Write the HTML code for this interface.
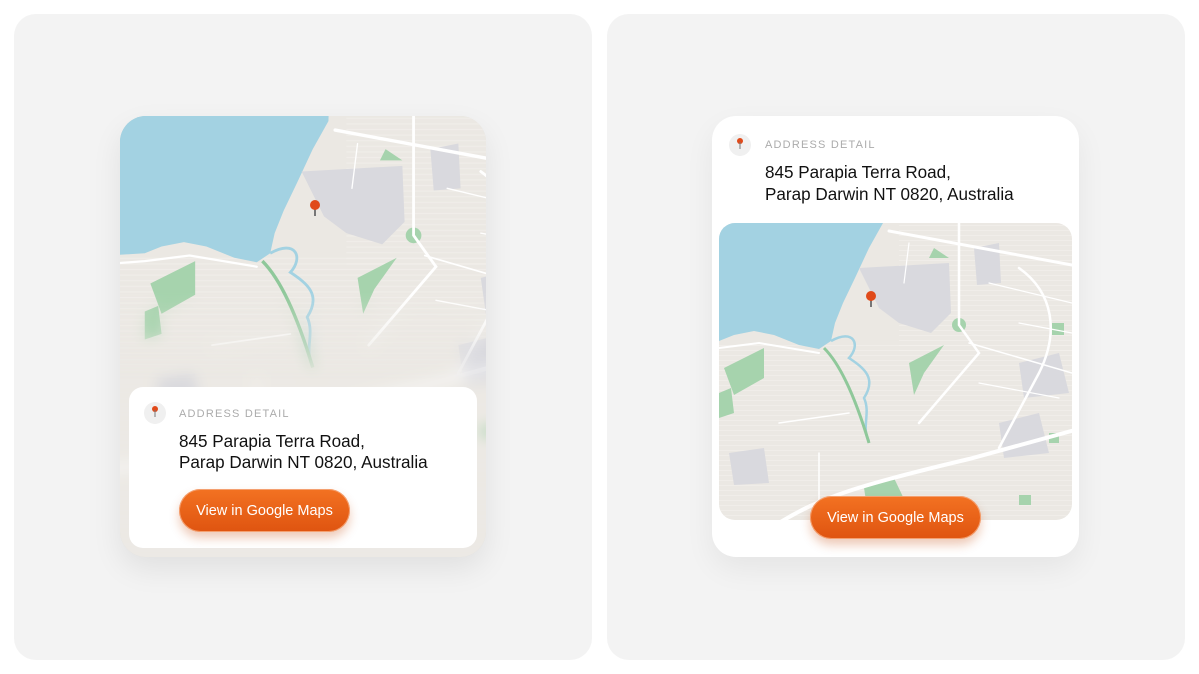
<!DOCTYPE html>
<html><head><meta charset="utf-8"><style>
*{margin:0;padding:0;box-sizing:border-box}
html,body{width:1199px;height:674px;overflow:hidden}
body{background:#fff;font-family:"Liberation Sans",sans-serif;position:relative}
.panel{position:absolute;top:14px;width:578px;height:646px;background:#f3f3f3;border-radius:22px}
.abs{position:absolute}
.lbl{font-size:11px;letter-spacing:1.2px;color:#ababab}
.addr{font-size:17.1px;line-height:21px;color:#111}
.ic{width:22px;height:22px;border-radius:50%;background:#f0f0f0}
.btn{border-radius:22px;background:linear-gradient(#f37222,#df5410);color:#fff;font-size:14.5px;display:flex;align-items:center;justify-content:center;box-shadow:0 0 0 1px #f4a070 inset,0 6px 10px rgba(200,80,20,.3)}
</style></head><body>
<svg width="1" height="1" style="position:absolute;left:0;top:0"><defs>
<pattern id="st" width="5" height="5" patternUnits="userSpaceOnUse"><path d="M0 2.5H5" stroke="#f3f1ed" stroke-width="1"/></pattern>
<g id="map">
<rect x="-200" y="-200" width="800" height="800" fill="#ebe8e3"/>
<rect x="-200" y="120" width="800" height="400" fill="url(#st)" opacity=".6"/>
<rect x="180" y="-200" width="400" height="330" fill="url(#st)" opacity=".6"/>
<polygon points="-200,-200 170,-200 164,0 150,25 136,55 124,80 116,100 112,118 100,126 80,122 55,112 35,108 15,112 0,118 -200,130" fill="#a3d2e2"/>
<polygon points="140,45 230,40 232,90 212,110 180,100 160,85" fill="#d9d9de"/>
<polygon points="255,25 280,20 282,60 258,62" fill="#d9d9de"/>
<polygon points="10,230 45,225 50,260 15,262" fill="#d9d9de"/>
<polygon points="280,200 320,190 330,230 285,235" fill="#d9d9de"/>
<polygon points="300,140 340,130 350,170 305,175" fill="#d9d9de"/>
<polygon points="5,145 45,125 45,155 15,172" fill="#a6d3ad"/>
<polygon points="0,170 12,165 15,190 0,195" fill="#a6d3ad"/>
<polygon points="145,265 175,255 195,297 150,297" fill="#a6d3ad"/>
<polygon points="190,140 225,122 205,150 195,172" fill="#a6d3ad"/>
<polygon points="210,35 230,35 215,25" fill="#a6d3ad"/>
<circle cx="240" cy="102" r="7" fill="#a6d3ad"/>
<rect x="330" y="210" width="10" height="10" fill="#a6d3ad"/>
<rect x="300" y="272" width="12" height="10" fill="#a6d3ad"/>
<rect x="333" y="100" width="12" height="12" fill="#a6d3ad"/>
<path d="M112,118 C135,105 142,122 130,135 C145,145 158,155 145,175 C152,190 142,205 150,218" stroke="#a3d2e2" stroke-width="2.5" fill="none"/>
<path d="M105,125 C120,140 135,170 150,220" stroke="#8fc89a" stroke-width="3" fill="none"/>
<g stroke="#fff" fill="none" stroke-linecap="round">
<path d="M-200,330 L60,300 C100,275 140,262 250,236 L400,195" stroke-width="4"/>
<path d="M170,8 L353,42 L400,50" stroke-width="3"/>
<path d="M240,-100 L240,102 L260,130 L200,200" stroke-width="2.5"/>
<path d="M300,45 C335,70 340,110 320,150 L280,225" stroke-width="2.5"/>
<path d="M-200,140 L0,125 L40,120 L100,130" stroke-width="2"/>
<path d="M100,230 L100,300 M60,200 L130,190" stroke-width="1.5"/>
<path d="M250,120 L353,150" stroke-width="1.5"/>
<path d="M270,60 L353,80 M190,20 L185,60 M300,100 L353,110 M260,160 L340,175" stroke-width="1.2"/>
</g>
</g>
<g id="pin"><rect x="-1" y="0" width="2" height="10" fill="#777"/><circle cx="0" cy="-1" r="5" fill="#e04a1a"/></g>
<filter id="bl" x="-20%" y="-20%" width="140%" height="140%"><feGaussianBlur stdDeviation="7"/></filter>
<linearGradient id="fg" x1="0" y1="0" x2="0" y2="1"><stop offset="0.4" stop-color="#fff"/><stop offset="0.6" stop-color="#000"/></linearGradient>
<mask id="mk" maskUnits="userSpaceOnUse" x="0" y="0" width="366" height="441"><rect width="366" height="441" fill="url(#fg)"/></mask>
</defs></svg>

<div class="panel" style="left:14px"></div>
<div class="panel" style="left:607px"></div>

<div class="abs" style="left:120px;top:116px;width:366px;height:441px;border-radius:26px;overflow:hidden;box-shadow:0 12px 30px rgba(0,0,0,.08);background:#dcdcd6">
<svg width="366" height="441">
<g filter="url(#bl)"><g transform="translate(195,88) scale(1.12) translate(-152,-74)"><use href="#map"/></g></g>
<g mask="url(#mk)"><g transform="translate(195,88) scale(1.12) translate(-152,-74)"><use href="#map"/></g></g>
<use href="#pin" transform="translate(195,90)"/>
</svg>
</div>
<div class="abs" style="left:129px;top:387px;width:348px;height:161px;background:#fff;border-radius:14px"></div>
<div class="abs ic" style="left:144px;top:402px"></div>
<svg class="abs" style="left:150px;top:404px" width="10" height="16"><circle cx="5" cy="5" r="3" fill="#e04a1a"/><rect x="4.5" y="6" width="1" height="7" fill="#777"/></svg>
<div class="abs lbl" style="left:179px;top:408px">ADDRESS DETAIL</div>
<div class="abs addr" style="left:179px;top:431px">845 Parapia Terra Road,<br>Parap Darwin NT 0820, Australia</div>
<div class="abs btn" style="left:179px;top:489px;width:171px;height:43px">View in Google Maps</div>

<div class="abs" style="left:712px;top:116px;width:367px;height:441px;background:#fff;border-radius:24px;box-shadow:0 12px 30px rgba(0,0,0,.06)"></div>
<div class="abs ic" style="left:729px;top:134px"></div>
<svg class="abs" style="left:735px;top:136px" width="10" height="16"><circle cx="5" cy="5" r="3" fill="#e04a1a"/><rect x="4.5" y="6" width="1" height="7" fill="#777"/></svg>
<div class="abs lbl" style="left:765px;top:139px">ADDRESS DETAIL</div>
<div class="abs addr" style="left:765px;top:162px;line-height:22px">845 Parapia Terra Road,<br>Parap Darwin NT 0820, Australia</div>
<div class="abs" style="left:719px;top:223px;width:353px;height:297px;border-radius:16px;overflow:hidden">
<svg width="353" height="297"><use href="#map"/><use href="#pin" transform="translate(152,74)"/></svg>
</div>
<div class="abs btn" style="left:810px;top:496px;width:171px;height:43px">View in Google Maps</div>
</body></html>
